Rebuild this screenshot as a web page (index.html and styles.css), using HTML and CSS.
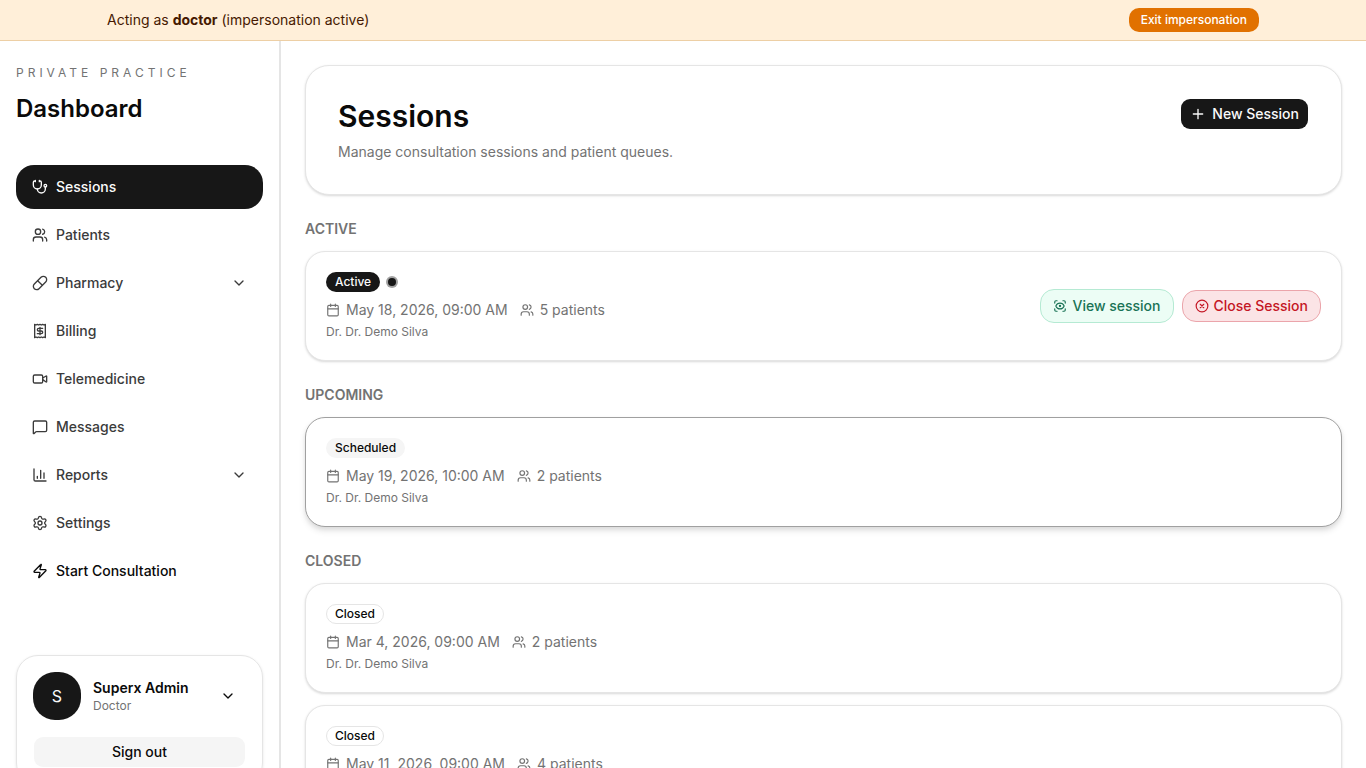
FILE: index.html
```html
<!DOCTYPE html>
<html lang="en">
<head>
  <meta charset="UTF-8" />
  <meta name="viewport" content="width=device-width, initial-scale=1" />
  <title>Sessions</title>
  <link rel="stylesheet" href="styles.css">
</head>
<body>

  <!-- Shared icons -->
  <svg class="sprite" aria-hidden="true">
    <symbol id="calendar" viewBox="0 0 24 24">
      <path d="M8 2v4M16 2v4M3 10h18" />
      <rect x="3" y="4" width="18" height="18" rx="2" />
    </symbol>
    <symbol id="users" viewBox="0 0 24 24">
      <path d="M16 21v-2a4 4 0 0 0-4-4H6a4 4 0 0 0-4 4v2" />
      <circle cx="9" cy="7" r="4" />
      <path d="M22 21v-2a4 4 0 0 0-3-3.87M16 3.13a4 4 0 0 1 0 7.75" />
    </symbol>
    <symbol id="chevron" viewBox="0 0 24 24">
      <path d="m6 9 6 6 6-6" />
    </symbol>
  </svg>

  <div class="banner">
    <div class="banner-inner">
      <p>Acting as <strong>doctor</strong> (impersonation active)</p>
      <button class="exit-btn" type="button">Exit impersonation</button>
    </div>
  </div>

  <div class="layout">
    <aside class="sidebar">
      <p class="eyebrow">Private Practice</p>
      <p class="brand">Dashboard</p>

      <nav class="nav">
        <a class="nav-item active" href="#">
          <svg class="icon" viewBox="0 0 24 24"><path d="M11 2v2M5 2v2M5 3H4a2 2 0 0 0-2 2v4a6 6 0 0 0 12 0V5a2 2 0 0 0-2-2h-1" /><path d="M8 15a6 6 0 0 0 12 0v-3" /><circle cx="20" cy="10" r="2" /></svg>
          Sessions
        </a>
        <a class="nav-item" href="#">
          <svg class="icon"><use href="#users" /></svg>
          Patients
        </a>
        <button class="nav-item" type="button">
          <svg class="icon" viewBox="0 0 24 24"><path d="m10.5 20.5 10-10a4.95 4.95 0 1 0-7-7l-10 10a4.95 4.95 0 1 0 7 7Z" /><path d="m8.5 8.5 7 7" /></svg>
          Pharmacy
          <svg class="icon arrow"><use href="#chevron" /></svg>
        </button>
        <a class="nav-item" href="#">
          <svg class="icon" viewBox="0 0 24 24"><path d="M4 2v20l2-1 2 1 2-1 2 1 2-1 2 1 2-1 2 1V2l-2 1-2-1-2 1-2-1-2 1-2-1-2 1Z" /><path d="M16 8h-6a2 2 0 1 0 0 4h4a2 2 0 1 1 0 4H8M12 17.5v-11" /></svg>
          Billing
        </a>
        <a class="nav-item" href="#">
          <svg class="icon" viewBox="0 0 24 24"><path d="m16 13 5.223 3.482a.5.5 0 0 0 .777-.416V7.87a.5.5 0 0 0-.752-.432L16 10.5" /><rect x="2" y="6" width="14" height="12" rx="2" /></svg>
          Telemedicine
        </a>
        <a class="nav-item" href="#">
          <svg class="icon" viewBox="0 0 24 24"><path d="M22 17a2 2 0 0 1-2 2H6.828a2 2 0 0 0-1.414.586l-2.202 2.202A.71.71 0 0 1 2 21.286V5a2 2 0 0 1 2-2h16a2 2 0 0 1 2 2z" /></svg>
          Messages
        </a>
        <button class="nav-item" type="button">
          <svg class="icon" viewBox="0 0 24 24"><path d="M3 3v16a2 2 0 0 0 2 2h16M18 17V9M13 17V5M8 17v-3" /></svg>
          Reports
          <svg class="icon arrow"><use href="#chevron" /></svg>
        </button>
        <a class="nav-item" href="#">
          <svg class="icon" viewBox="0 0 24 24"><path d="M9.671 4.136a2.34 2.34 0 0 1 4.659 0 2.34 2.34 0 0 0 3.319 1.915 2.34 2.34 0 0 1 2.33 4.033 2.34 2.34 0 0 0 0 3.831 2.34 2.34 0 0 1-2.33 4.033 2.34 2.34 0 0 0-3.319 1.915 2.34 2.34 0 0 1-4.659 0 2.34 2.34 0 0 0-3.32-1.915 2.34 2.34 0 0 1-2.33-4.033 2.34 2.34 0 0 0 0-3.831A2.34 2.34 0 0 1 6.35 6.051a2.34 2.34 0 0 0 3.319-1.915" /><circle cx="12" cy="12" r="3" /></svg>
          Settings
        </a>
        <a class="nav-item strong" href="#">
          <svg class="icon" viewBox="0 0 24 24"><path d="M4 14a1 1 0 0 1-.78-1.63l9.9-10.2a.5.5 0 0 1 .86.46l-1.92 6.02A1 1 0 0 0 13 10h7a1 1 0 0 1 .78 1.63l-9.9 10.2a.5.5 0 0 1-.86-.46l1.92-6.02A1 1 0 0 0 11 14z" /></svg>
          Start Consultation
        </a>
      </nav>

      <div class="user-card">
        <button class="user" type="button">
          <span class="avatar">S</span>
          <span class="user-text">
            <span class="user-name">Superx Admin</span>
            <span class="user-role">Doctor</span>
          </span>
          <svg class="icon arrow"><use href="#chevron" /></svg>
        </button>
        <button class="sign-out" type="button">Sign out</button>
      </div>
    </aside>

    <main class="content">
      <header class="card page-header">
        <div>
          <h1>Sessions</h1>
          <p>Manage consultation sessions and patient queues.</p>
        </div>
        <button class="new-btn" type="button">
          <svg class="icon" viewBox="0 0 24 24"><path d="M5 12h14M12 5v14" /></svg>
          New Session
        </button>
      </header>

      <section>
        <h2>Active</h2>
        <article class="card session">
          <div>
            <div class="status">
              <span class="badge badge-active">Active</span>
              <span class="dot"></span>
            </div>
            <div class="meta">
              <span><svg class="icon"><use href="#calendar" /></svg>May 18, 2026, 09:00 AM</span>
              <span><svg class="icon"><use href="#users" /></svg>5 patients</span>
            </div>
            <p class="doctor">Dr. Dr. Demo Silva</p>
          </div>
          <div class="actions">
            <button class="action view" type="button">
              <svg class="icon" viewBox="0 0 24 24"><path d="M3 7V5a2 2 0 0 1 2-2h2M17 3h2a2 2 0 0 1 2 2v2M21 17v2a2 2 0 0 1-2 2h-2M7 21H5a2 2 0 0 1-2-2v-2" /><circle cx="12" cy="12" r="1" /><path d="M18.944 12.33a1 1 0 0 0 0-.66 7.5 7.5 0 0 0-13.888 0 1 1 0 0 0 0 .66 7.5 7.5 0 0 0 13.888 0" /></svg>
              View session
            </button>
            <button class="action close" type="button">
              <svg class="icon" viewBox="0 0 24 24"><circle cx="12" cy="12" r="10" /><path d="m15 9-6 6M9 9l6 6" /></svg>
              Close Session
            </button>
          </div>
        </article>
      </section>

      <section>
        <h2>Upcoming</h2>
        <article class="card session selected">
          <div>
            <div class="status"><span class="badge badge-scheduled">Scheduled</span></div>
            <div class="meta">
              <span><svg class="icon"><use href="#calendar" /></svg>May 19, 2026, 10:00 AM</span>
              <span><svg class="icon"><use href="#users" /></svg>2 patients</span>
            </div>
            <p class="doctor">Dr. Dr. Demo Silva</p>
          </div>
        </article>
      </section>

      <section>
        <h2>Closed</h2>
        <article class="card session">
          <div>
            <div class="status"><span class="badge badge-closed">Closed</span></div>
            <div class="meta">
              <span><svg class="icon"><use href="#calendar" /></svg>Mar 4, 2026, 09:00 AM</span>
              <span><svg class="icon"><use href="#users" /></svg>2 patients</span>
            </div>
            <p class="doctor">Dr. Dr. Demo Silva</p>
          </div>
        </article>
        <article class="card session">
          <div>
            <div class="status"><span class="badge badge-closed">Closed</span></div>
            <div class="meta">
              <span><svg class="icon"><use href="#calendar" /></svg>May 11, 2026, 09:00 AM</span>
              <span><svg class="icon"><use href="#users" /></svg>4 patients</span>
            </div>
            <p class="doctor">Dr. Dr. Demo Silva</p>
          </div>
        </article>
      </section>
    </main>
  </div>

</body>
</html>
```
FILE: styles.css
```css
* {
  box-sizing: border-box;
}
body {
  margin: 0;
  font-family: Inter, "Liberation Sans", sans-serif;
  font-size: 14px;
  line-height: 20px;
  color: #0a0a0a;
  background: #fff;
}
h1, h2, p {
  margin: 0;
}
button {
  font: inherit;
  color: inherit;
  cursor: pointer;
}
.sprite {
  display: none;
}
.icon {
  width: 16px;
  height: 16px;
  flex-shrink: 0;
  fill: none;
  stroke: currentColor;
  stroke-width: 2;
  stroke-linecap: round;
  stroke-linejoin: round;
}

/* Impersonation banner */
.banner {
  background: #ffefd9;
  border-bottom: 1px solid #edcfa5;
  color: #461901;
}
.banner-inner {
  display: flex;
  align-items: center;
  justify-content: space-between;
  max-width: 1152px;
  margin: 0 auto;
  padding: 8px 0;
}
.exit-btn {
  padding: 4px 12px;
  border: none;
  border-radius: 10px;
  background: #e17100;
  color: #fff;
  font-size: 12px;
  font-weight: 500;
  line-height: 16px;
}

.layout {
  display: grid;
  grid-template-columns: 280px minmax(0, 1fr);
}

/* Sidebar */
.sidebar {
  display: flex;
  flex-direction: column;
  height: 100vh;
  padding: 24px 16px;
  border-right: 1px solid #e5e5e5;
}
.eyebrow {
  color: #737373;
  font-size: 12px;
  line-height: 16px;
  letter-spacing: 4px;
  text-transform: uppercase;
}
.brand {
  margin-top: 12px;
  font-size: 24px;
  font-weight: 600;
  line-height: 32px;
}
.nav {
  display: flex;
  flex-direction: column;
  gap: 4px;
  margin-top: 40px;
}
.nav-item {
  display: flex;
  align-items: center;
  gap: 8px;
  width: 100%;
  padding: 12px 16px;
  border: none;
  border-radius: 18px;
  background: none;
  color: #3b3b3b;
  font-weight: 500;
  text-decoration: none;
}
.nav-item.active {
  background: #171717;
  color: #fafafa;
}
.nav-item.strong {
  color: #0a0a0a;
}
.arrow {
  margin-left: auto;
}
.user-card {
  margin-top: auto;
  padding: 16px;
  border: 1px solid #e5e5e5;
  border-radius: 22px;
  box-shadow: 0 1px 3px rgba(0, 0, 0, 0.1);
}
.user {
  display: flex;
  align-items: center;
  gap: 12px;
  width: 100%;
  padding: 0 10px 0 0;
  border: none;
  background: none;
  text-align: left;
}
.avatar {
  display: grid;
  place-items: center;
  width: 48px;
  height: 48px;
  border-radius: 22px;
  background: #171717;
  color: #fafafa;
  font-size: 16px;
}
.user-text {
  display: grid;
}
.user-name {
  font-weight: 600;
}
.user-role {
  color: #737373;
  font-size: 12px;
  line-height: 16px;
}
.sign-out {
  width: 100%;
  height: 32px;
  margin-top: 16px;
  border: 1px solid transparent;
  border-radius: 10px;
  background: #f5f5f5;
  background-clip: padding-box;
  font-weight: 500;
}

/* Content */
.content {
  display: flex;
  flex-direction: column;
  gap: 24px;
  padding: 24px;
  border-left: 1px solid #e5e5e5;
}
.card {
  border: 1px solid #e5e5e5;
  border-radius: 20px;
  background: #fff;
  box-shadow: 0 1px 3px rgba(0, 0, 0, 0.1), 0 1px 2px rgba(0, 0, 0, 0.06);
}
.page-header {
  display: flex;
  align-items: flex-start;
  justify-content: space-between;
  padding: 32px;
  border-radius: 24px;
}
h1 {
  margin-bottom: 8px;
  font-size: 30px;
  font-weight: 600;
  line-height: 36px;
}
.page-header p {
  color: #737373;
}
.new-btn {
  display: flex;
  align-items: center;
  gap: 6px;
  height: 32px;
  padding: 0 9px;
  border: 1px solid transparent;
  border-radius: 10px;
  background: #171717;
  background-clip: padding-box;
  color: #fafafa;
  font-weight: 500;
}
section {
  display: flex;
  flex-direction: column;
  gap: 12px;
}
h2 {
  color: #737373;
  font-size: 14px;
  font-weight: 600;
  line-height: 20px;
  text-transform: uppercase;
}
.session {
  display: flex;
  align-items: center;
  justify-content: space-between;
  padding: 20px;
}
.session.selected {
  border-color: #a0a0a0;
  box-shadow: 0 4px 6px rgba(0, 0, 0, 0.1), 0 2px 4px rgba(0, 0, 0, 0.06);
}
.status {
  display: flex;
  align-items: center;
  gap: 8px;
}
.badge {
  padding: 1px 8px;
  border: 1px solid transparent;
  border-radius: 10px;
  font-size: 12px;
  font-weight: 500;
  line-height: 16px;
}
.badge-active {
  background: #171717;
  color: #fafafa;
}
.badge-scheduled {
  background: #f5f5f5;
}
.badge-closed {
  border-color: #e5e5e5;
}
.dot {
  width: 8px;
  height: 8px;
  border-radius: 50%;
  background: #171717;
  box-shadow: 0 0 0 2px rgba(23, 23, 23, 0.4);
}
.meta {
  display: flex;
  gap: 12px;
  margin-top: 8px;
  color: #737373;
}
.meta span {
  display: flex;
  align-items: center;
  gap: 6px;
}
.meta .icon {
  width: 14px;
  height: 14px;
}
.doctor {
  margin-top: 4px;
  color: #737373;
  font-size: 12px;
  line-height: 16px;
}
.actions {
  display: flex;
  align-items: center;
  gap: 8px;
}
.action {
  display: flex;
  align-items: center;
  gap: 5px;
  padding: 6px 12px;
  border: 1px solid;
  border-radius: 14px;
  font-weight: 500;
}
.action .icon {
  width: 14px;
  height: 14px;
}
.view {
  border-color: #b5ead3;
  background: #ecfdf5;
  color: #1a7356;
}
.close {
  padding: 5px 12px;
  border-color: #eba5ab;
  background: #fbe4e6;
  color: #c41624;
}
```
